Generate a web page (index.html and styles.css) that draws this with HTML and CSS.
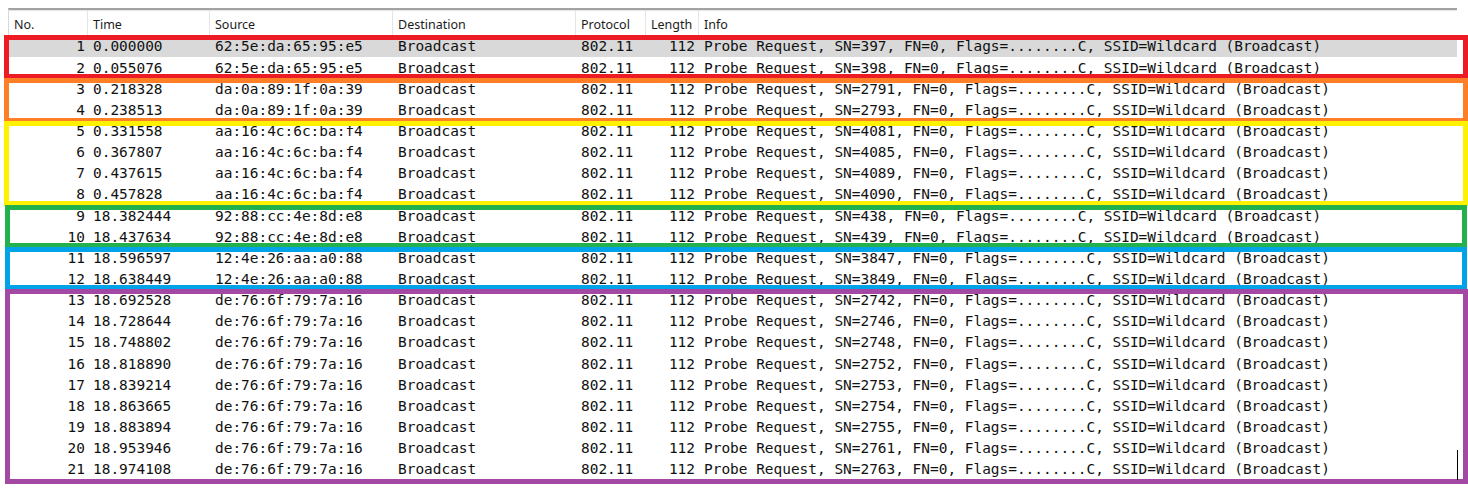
FILE: index.html
```html
<!DOCTYPE html>
<html>
<head>
<meta charset="utf-8">
<link rel="stylesheet" href="styles.css">
</head>
<body>
<div class="page">
  <div class="packets">
    <div class="head">
      <div class="hc">No.</div>
      <div class="hc">Time</div>
      <div class="hc">Source</div>
      <div class="hc">Destination</div>
      <div class="hc">Protocol</div>
      <div class="hc">Length</div>
      <div class="hc last">Info</div>
    </div>
    <div class="row sel"><span class="no">1</span><span class="t">0.000000</span><span>62:5e:da:65:95:e5</span><span>Broadcast</span><span>802.11</span><span class="len">112</span><span class="info">Probe Request, SN=397, FN=0, Flags=........C, SSID=Wildcard (Broadcast)</span></div>
    <div class="row"><span class="no">2</span><span class="t">0.055076</span><span>62:5e:da:65:95:e5</span><span>Broadcast</span><span>802.11</span><span class="len">112</span><span class="info">Probe Request, SN=398, FN=0, Flags=........C, SSID=Wildcard (Broadcast)</span></div>
    <div class="row"><span class="no">3</span><span class="t">0.218328</span><span>da:0a:89:1f:0a:39</span><span>Broadcast</span><span>802.11</span><span class="len">112</span><span class="info">Probe Request, SN=2791, FN=0, Flags=........C, SSID=Wildcard (Broadcast)</span></div>
    <div class="row"><span class="no">4</span><span class="t">0.238513</span><span>da:0a:89:1f:0a:39</span><span>Broadcast</span><span>802.11</span><span class="len">112</span><span class="info">Probe Request, SN=2793, FN=0, Flags=........C, SSID=Wildcard (Broadcast)</span></div>
    <div class="row"><span class="no">5</span><span class="t">0.331558</span><span>aa:16:4c:6c:ba:f4</span><span>Broadcast</span><span>802.11</span><span class="len">112</span><span class="info">Probe Request, SN=4081, FN=0, Flags=........C, SSID=Wildcard (Broadcast)</span></div>
    <div class="row"><span class="no">6</span><span class="t">0.367807</span><span>aa:16:4c:6c:ba:f4</span><span>Broadcast</span><span>802.11</span><span class="len">112</span><span class="info">Probe Request, SN=4085, FN=0, Flags=........C, SSID=Wildcard (Broadcast)</span></div>
    <div class="row"><span class="no">7</span><span class="t">0.437615</span><span>aa:16:4c:6c:ba:f4</span><span>Broadcast</span><span>802.11</span><span class="len">112</span><span class="info">Probe Request, SN=4089, FN=0, Flags=........C, SSID=Wildcard (Broadcast)</span></div>
    <div class="row"><span class="no">8</span><span class="t">0.457828</span><span>aa:16:4c:6c:ba:f4</span><span>Broadcast</span><span>802.11</span><span class="len">112</span><span class="info">Probe Request, SN=4090, FN=0, Flags=........C, SSID=Wildcard (Broadcast)</span></div>
    <div class="row"><span class="no">9</span><span class="t">18.382444</span><span>92:88:cc:4e:8d:e8</span><span>Broadcast</span><span>802.11</span><span class="len">112</span><span class="info">Probe Request, SN=438, FN=0, Flags=........C, SSID=Wildcard (Broadcast)</span></div>
    <div class="row"><span class="no">10</span><span class="t">18.437634</span><span>92:88:cc:4e:8d:e8</span><span>Broadcast</span><span>802.11</span><span class="len">112</span><span class="info">Probe Request, SN=439, FN=0, Flags=........C, SSID=Wildcard (Broadcast)</span></div>
    <div class="row"><span class="no">11</span><span class="t">18.596597</span><span>12:4e:26:aa:a0:88</span><span>Broadcast</span><span>802.11</span><span class="len">112</span><span class="info">Probe Request, SN=3847, FN=0, Flags=........C, SSID=Wildcard (Broadcast)</span></div>
    <div class="row"><span class="no">12</span><span class="t">18.638449</span><span>12:4e:26:aa:a0:88</span><span>Broadcast</span><span>802.11</span><span class="len">112</span><span class="info">Probe Request, SN=3849, FN=0, Flags=........C, SSID=Wildcard (Broadcast)</span></div>
    <div class="row"><span class="no">13</span><span class="t">18.692528</span><span>de:76:6f:79:7a:16</span><span>Broadcast</span><span>802.11</span><span class="len">112</span><span class="info">Probe Request, SN=2742, FN=0, Flags=........C, SSID=Wildcard (Broadcast)</span></div>
    <div class="row"><span class="no">14</span><span class="t">18.728644</span><span>de:76:6f:79:7a:16</span><span>Broadcast</span><span>802.11</span><span class="len">112</span><span class="info">Probe Request, SN=2746, FN=0, Flags=........C, SSID=Wildcard (Broadcast)</span></div>
    <div class="row"><span class="no">15</span><span class="t">18.748802</span><span>de:76:6f:79:7a:16</span><span>Broadcast</span><span>802.11</span><span class="len">112</span><span class="info">Probe Request, SN=2748, FN=0, Flags=........C, SSID=Wildcard (Broadcast)</span></div>
    <div class="row"><span class="no">16</span><span class="t">18.818890</span><span>de:76:6f:79:7a:16</span><span>Broadcast</span><span>802.11</span><span class="len">112</span><span class="info">Probe Request, SN=2752, FN=0, Flags=........C, SSID=Wildcard (Broadcast)</span></div>
    <div class="row"><span class="no">17</span><span class="t">18.839214</span><span>de:76:6f:79:7a:16</span><span>Broadcast</span><span>802.11</span><span class="len">112</span><span class="info">Probe Request, SN=2753, FN=0, Flags=........C, SSID=Wildcard (Broadcast)</span></div>
    <div class="row"><span class="no">18</span><span class="t">18.863665</span><span>de:76:6f:79:7a:16</span><span>Broadcast</span><span>802.11</span><span class="len">112</span><span class="info">Probe Request, SN=2754, FN=0, Flags=........C, SSID=Wildcard (Broadcast)</span></div>
    <div class="row"><span class="no">19</span><span class="t">18.883894</span><span>de:76:6f:79:7a:16</span><span>Broadcast</span><span>802.11</span><span class="len">112</span><span class="info">Probe Request, SN=2755, FN=0, Flags=........C, SSID=Wildcard (Broadcast)</span></div>
    <div class="row"><span class="no">20</span><span class="t">18.953946</span><span>de:76:6f:79:7a:16</span><span>Broadcast</span><span>802.11</span><span class="len">112</span><span class="info">Probe Request, SN=2761, FN=0, Flags=........C, SSID=Wildcard (Broadcast)</span></div>
    <div class="row"><span class="no">21</span><span class="t">18.974108</span><span>de:76:6f:79:7a:16</span><span>Broadcast</span><span>802.11</span><span class="len">112</span><span class="info">Probe Request, SN=2763, FN=0, Flags=........C, SSID=Wildcard (Broadcast)</span></div>
  </div>

  <div class="mark red"></div>
  <div class="mark orange"></div>
  <div class="mark yellow"></div>
  <div class="mark green"></div>
  <div class="mark blue"></div>
  <div class="mark purple"></div>
  <div class="cursor"></div>
</div>
</body>
</html>
```

FILE: styles.css
```css
html, body {
  margin: 0;
  padding: 0;
  background: #ffffff;
}

.page {
  position: relative;
  width: 1468px;
  height: 491px;
  padding: 8px 0 0 8px;
  box-sizing: border-box;
  overflow: hidden;
}

.packets {
  width: 1449px;
  border-top: 2px solid #a3a3a3;
  border-left: 1px solid #d8d8d8;
  box-sizing: border-box;
}

.head,
.row {
  display: grid;
  grid-template-columns: 79px 122px 183px 183px 70px 53px 1fr;
}

.head {
  height: 26px;
  font-family: "Noto Sans", "Open Sans", sans-serif;
  font-size: 12.5px;
  color: #1b1b1b;
  border-top: 1px solid #e6e6e6;
  box-sizing: border-box;
}

.hc {
  border-right: 1px solid #e5e5e5;
  padding: 5px 0 0 5px;
  line-height: 18px;
  white-space: nowrap;
}

.hc.last {
  border-right: none;
}

.row {
  height: 21.15px;
  box-sizing: border-box;
  padding-top: 1.4px;
  font-family: "DejaVu Sans Mono", "Liberation Mono", monospace;
  font-size: 14.45px;
  line-height: 19.75px;
  color: #111111;
  white-space: pre;
}

.row span {
  padding-left: 5px;
  overflow: hidden;
}

.row .no {
  text-align: right;
  padding-left: 0;
  padding-right: 3px;
}

.row .len {
  text-align: right;
  padding-left: 0;
  padding-right: 4px;
}

.row.sel {
  background: #d9d9d9;
}

.mark {
  position: absolute;
  border: 5px solid;
  box-sizing: border-box;
}

.red    { left: 4px; top: 35px;  width: 1464px; height: 44px;  border-color: #ed1c24; }
.orange { left: 4px; top: 78px;  width: 1464px; height: 45px;  border-color: #ff7f27; }
.yellow { left: 4px; top: 121px; width: 1464px; height: 85px;  border-color: #fff200; }
.green  { left: 5px; top: 205px; width: 1462px; height: 43px;  border-color: #22b14c; }
.blue   { left: 5px; top: 247px; width: 1462px; height: 43px;  border-color: #00a2e8; }
.purple { left: 5px; top: 289px; width: 1463px; height: 195px; border-color: #a349a4; }

.cursor {
  position: absolute;
  left: 1457px;
  top: 450px;
  width: 1px;
  height: 30px;
  background: #000;
}
```
